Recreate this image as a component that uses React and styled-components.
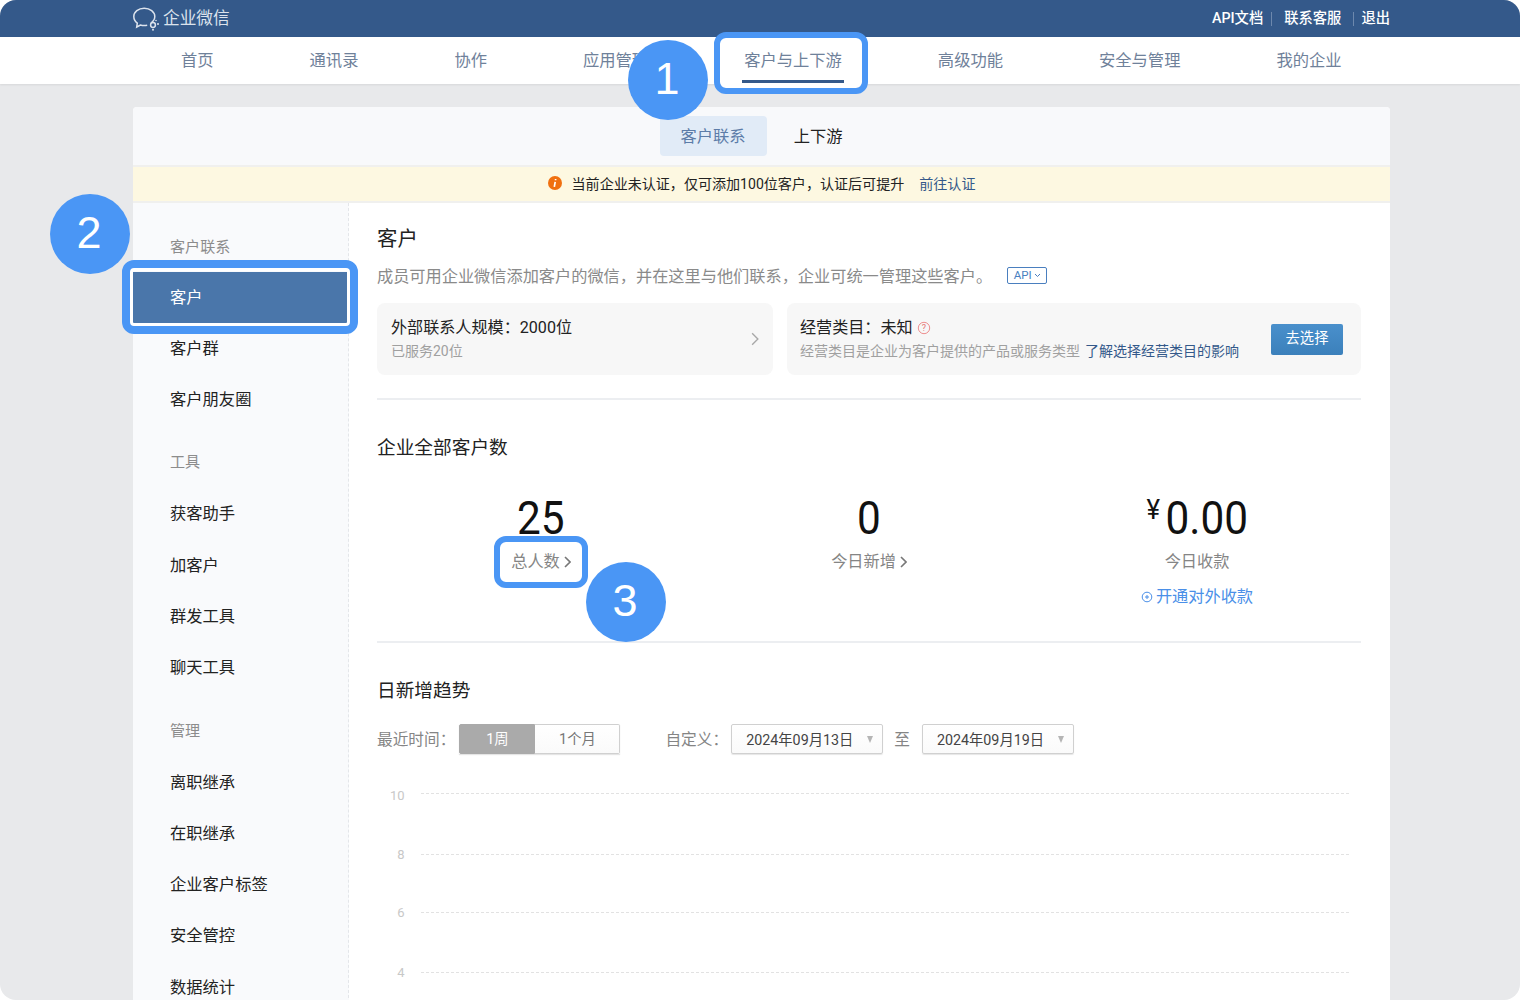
import React from 'react';
import styled, { createGlobalStyle } from 'styled-components';

const Global = createGlobalStyle`
  html, body { margin: 0; padding: 0; background: #fff; }
  * { box-sizing: border-box; }
`;

const FONT = `"Roboto", "Noto Sans CJK SC", sans-serif`;

const Page = styled.div`
  position: relative;
  width: 1520px;
  height: 1000px;
  overflow: hidden;
  background: #e8e9eb;
  border-radius: 16px;
  font-family: ${FONT};
  color: #222;
`;

const TopBar = styled.header`
  height: 37px;
  background: #34598a;
  display: flex;
  align-items: center;
  justify-content: space-between;
  padding: 0 130px 0 133px;
`;
const Brand = styled.div`
  display: flex;
  align-items: center;
  gap: 3px;
  color: #dce3ed;
  font-size: 16.7px;
  line-height: 37px;
`;
const TopLinks = styled.nav`
  display: flex;
  align-items: center;
  color: #fff;
  font-size: 14.3px;
  font-weight: 500;
  line-height: 37px;
`;
const Sep = styled.span`
  width: 1px;
  height: 14px;
  background: #6d88ad;
  margin: 0 ${p => p.$right}px 0 ${p => p.$left}px;
`;

const MainNav = styled.nav`
  height: 47px;
  background: #fff;
  display: flex;
  align-items: center;
  gap: 96px;
  padding-left: 181px;
  box-shadow: 0 1px 2px rgba(0,0,0,.08);
`;
const NavItem = styled.a`
  position: relative;
  font-size: 16.3px;
  line-height: 47px;
  color: #6f819a;
  white-space: nowrap;
  ${p => p.$active && `
    &::after {
      content: '';
      position: absolute;
      left: -2px;
      right: -2px;
      bottom: 1px;
      height: 3px;
      background: #34598a;
    }
  `}
`;

const Card = styled.section`
  width: 1257px;
  margin: 23px 0 0 133px;
  background: #fff;
  border-radius: 4px 4px 0 0;
  overflow: hidden;
`;
const TabBar = styled.div`
  height: 58px;
  background: #f8f9fb;
  display: flex;
  align-items: center;
  justify-content: center;
  gap: 6px;
`;
const Tab = styled.a`
  height: 40px;
  padding: 0 21px;
  border-radius: 4px;
  font-size: 16.3px;
  line-height: 42px;
  background: ${p => (p.$active ? '#e1ebf7' : 'transparent')};
  color: ${p => (p.$active ? '#5c7ca8' : '#222')};
`;
const Notice = styled.div`
  height: 38px;
  background: #fdf8e1;
  border-top: 2px solid #f0f0ee;
  border-bottom: 2px solid #f0f0ee;
  padding-bottom: 2px;
  display: flex;
  align-items: center;
  justify-content: center;
  font-size: 14.05px;
  color: #222;
`;
const NoticeIcon = styled.svg`
  width: 14px;
  height: 14px;
  margin-right: 10px;
`;
const NoticeLink = styled.a`
  margin-left: 15px;
  color: #34598a;
`;

const Body = styled.div`
  display: flex;
  align-items: stretch;
`;
const Side = styled.aside`
  width: 216px;
  flex: none;
  height: 800px;
  background: #f9fafc;
  border-right: 1px dashed #e4e6ea;
  padding-top: 18.5px;
`;
const SideLabel = styled.div`
  height: ${p => p.$h}px;
  line-height: 50px;
  padding-left: 37px;
  font-size: 15.1px;
  color: #8c8c8c;
  margin-top: ${p => p.$top || 0}px;
`;
const SideItem = styled.a`
  display: block;
  height: 51.3px;
  line-height: 51.3px;
  padding-left: 37px;
  font-size: 16.3px;
  color: ${p => (p.$active ? '#fff' : '#222')};
  background: ${p => (p.$active ? '#4a76aa' : 'transparent')};
`;

const Content = styled.main`
  flex: 1;
  padding: 21px 29px 0 28px;
`;
const PageTitle = styled.h1`
  margin: 0;
  font-size: 20.4px;
  font-weight: 400;
  line-height: 30px;
`;
const Desc = styled.div`
  margin-top: 9px;
  height: 24px;
  display: flex;
  align-items: center;
  font-size: 16.2px;
  color: #8a8a8a;
  white-space: nowrap;
`;
const ApiTag = styled.span`
  margin: 1px 0 0 15px;
  width: 40px;
  height: 17px;
  border: 1px solid #4a7fbf;
  border-radius: 2px;
  font-size: 11.500px;
  line-height: 15px;
  color: #4a7fbf;
  display: flex;
  align-items: center;
  justify-content: center;
  gap: 2px;
`;
const InfoRow = styled.div`
  margin-top: 16px;
  display: flex;
  gap: 14px;
`;
const InfoCard = styled.div`
  height: 72px;
  background: #f7f7f7;
  border-radius: 8px;
  display: flex;
  align-items: center;
  justify-content: space-between;
  width: ${p => p.$w}px;
  padding: 0 ${p => p.$pr}px 0 ${p => p.$pl}px;
`;
const InfoTitle = styled.div`
  display: flex;
  align-items: center;
  gap: 4px;
  font-size: 16.1px;
  line-height: 24px;
  color: #222;
`;
const InfoSub = styled.div`
  font-size: 14px;
  line-height: 22px;
  color: #a0a0a0;
  white-space: nowrap;
`;
const InfoLink = styled.a`
  margin-left: 5px;
  color: #34598a;
`;
const PrimaryBtn = styled.button`
  width: 72px;
  height: 31px;
  border: 0;
  border-radius: 2px;
  background: linear-gradient(#4a90cc, #3b80bb);
  color: #fff;
  font: 14.3px/29px ${FONT};
  padding: 0 0 2px;
`;
const Divider = styled.div`
  height: 2px;
  background: #eceef1;
  margin-top: ${p => p.$top}px;
`;
const SectionTitle = styled.h2`
  margin: ${p => p.$top}px 0 0;
  font-size: 18.7px;
  font-weight: 400;
  line-height: 28px;
  color: #222;
`;
const Stats = styled.div`
  margin-top: 29px;
  height: 150px;
  display: grid;
  grid-template-columns: repeat(3, 1fr);
`;
const Stat = styled.div`
  display: flex;
  flex-direction: column;
  align-items: center;
`;
const Num = styled.div`
  font-size: 46px;
  line-height: 54px;
  color: #111;
  transform: scaleX(.92);
  display: flex;
  align-items: flex-start;
`;
const Yen = styled.span`
  font-size: 28px;
  line-height: 38px;
  margin-right: 6px;
`;
const StatLabel = styled.div`
  margin-top: 5px;
  display: flex;
  align-items: center;
  gap: 4px;
  font-size: 16.2px;
  line-height: 24px;
  color: #858585;
`;
const StatLink = styled.a`
  margin-top: 11px;
  display: flex;
  align-items: center;
  gap: 3px;
  font-size: 16.2px;
  line-height: 24px;
  color: #4a8fe8;
`;
const Controls = styled.div`
  margin-top: 19px;
  height: 30px;
  display: flex;
  align-items: center;
  font-size: 15.7px;
  color: #858585;
`;
const ControlLabel = styled.span`
  margin-bottom: 2px;
`;
const Seg = styled.div`
  margin: 0 45px 0 4px;
  display: flex;
  height: 30px;
  box-shadow: 0 1px 1px rgba(0,0,0,.1);
`;
const SegBtn = styled.span`
  width: ${p => p.$w}px;
  text-align: center;
  line-height: 28px;
  font-size: 14.3px;
  color: ${p => (p.$on ? '#fff' : '#777')};
  background: ${p => (p.$on ? '#aaa' : 'linear-gradient(#fff,#fafafa)')};
  border: 1px solid ${p => (p.$on ? '#aaa' : '#d0d0d0')};
  border-left: ${p => (p.$on ? '1px solid #aaa' : '0')};
  border-radius: ${p => (p.$on ? '2px 0 0 2px' : '0 2px 2px 0')};
`;
const DateSel = styled.div`
  width: 152px;
  height: 30px;
  margin-left: ${p => p.$left}px;
  border: 1px solid #d0d0d0;
  border-radius: 2px;
  background: linear-gradient(#fff,#fafafa);
  box-shadow: 0 1px 1px rgba(0,0,0,.1);
  padding: 0 9px 2px 14px;
  display: flex;
  align-items: center;
  justify-content: space-between;
  font-size: 14.3px;
  color: #444;
  white-space: nowrap;
`;
const Caret = styled.span`
  width: 0;
  height: 0;
  margin-top: 3px;
  border-left: 3.5px solid transparent;
  border-right: 3.5px solid transparent;
  border-top: 7px solid #b5b5b5;
`;
const To = styled(ControlLabel)`
  margin-left: 11px;
`;
const Chart = styled.svg`
  display: block;
  margin-top: 22px;
  width: 984px;
  height: 220px;
`;

const Mark = styled.div`
  position: absolute;
  left: ${p => p.$x}px;
  top: ${p => p.$y}px;
  width: ${p => p.$w}px;
  height: ${p => p.$h}px;
  border: ${p => p.$b}px solid #4a96f5;
  border-radius: 12px;
  box-shadow: inset 0 0 0 ${p => p.$ring}px #fff;
  pointer-events: none;
`;
const Badge = styled.div`
  position: absolute;
  left: ${p => p.$x}px;
  top: ${p => p.$y}px;
  width: 80px;
  height: 80px;
  padding-right: 2px;
  border-radius: 50%;
  background: #4a96f5;
  color: #fff;
  font-family: "Liberation Sans", sans-serif;
  font-size: 45px;
  line-height: 78px;
  text-align: center;
`;

const Chevron = ({ w = 7, h = 12, color = '#777', sw = 1.6 }) => (
  <svg width={w} height={h} viewBox="0 0 7 12" fill="none">
    <path d="M1 1l5 5-5 5" stroke={color} strokeWidth={sw} />
  </svg>
);

const NAV = ['首页', '通讯录', '协作', '应用管理', '客户与上下游', '高级功能', '安全与管理', '我的企业'];
const GROUPS = [
  { label: '客户联系', h: 50, top: 0, items: ['客户', '客户群', '客户朋友圈'] },
  { label: '工具', h: 51, top: 12, items: ['获客助手', '加客户', '群发工具', '聊天工具'] },
  { label: '管理', h: 51, top: 12, items: ['离职继承', '在职继承', '企业客户标签', '安全管控', '数据统计'] },
];
const TICKS = [['10', 17, 23.5], ['8', 78, 82.5], ['6', 136, 140.5], ['4', 196, 200.5]];

export default function App() {
  return (
    <Page>
      <Global />
      <TopBar>
        <Brand>
          <svg width="27" height="24" viewBox="0 0 27 24" fill="none" stroke="#dce3ed" strokeWidth="1.5">
            <path d="M18 16c2.500-1.800 3.800-4 3.800-6.500C21.800 5 17 1.200 11.200 1.200S.8 5 .8 9.500c0 2.700 1.300 5 3.500 6.600L3.700 20l3.700-2c1.200.4 2.500.6 3.800.6 1 0 2-.1 3-.3" />
            <circle cx="20" cy="18" r="2.400" />
            <circle cx="25" cy="17" r="1" fill="#dce3ed" stroke="none" />
            <circle cx="20" cy="22.800" r="1" fill="#dce3ed" stroke="none" />
            <circle cx="23" cy="13.500" r=".8" fill="#dce3ed" stroke="none" />
          </svg>
          企业微信
        </Brand>
        <TopLinks>
          API文档<Sep $left={8} $right={12} />联系客服<Sep $left={12} $right={7} />退出
        </TopLinks>
      </TopBar>
      <MainNav>
        {NAV.map(n => <NavItem key={n} $active={n === '客户与上下游'}>{n}</NavItem>)}
      </MainNav>
      <Card>
        <TabBar>
          <Tab $active>客户联系</Tab>
          <Tab>上下游</Tab>
        </TabBar>
        <Notice>
          <NoticeIcon viewBox="0 0 14 14">
            <circle cx="7" cy="7" r="7" fill="#f0700f" />
            <path d="M7.200 5.800L6.300 10.800M7.600 3v1.300" stroke="#fff" strokeWidth="1.700" />
          </NoticeIcon>
          当前企业未认证，仅可添加100位客户，认证后可提升
          <NoticeLink>前往认证</NoticeLink>
        </Notice>
        <Body>
          <Side>
            {GROUPS.map(g => (
              <React.Fragment key={g.label}>
                <SideLabel $top={g.top} $h={g.h}>{g.label}</SideLabel>
                {g.items.map(i => <SideItem key={i} $active={i === '客户'}>{i}</SideItem>)}
              </React.Fragment>
            ))}
          </Side>
          <Content>
            <PageTitle>客户</PageTitle>
            <Desc>
              成员可用企业微信添加客户的微信，并在这里与他们联系，企业可统一管理这些客户。
              <ApiTag>
                API
                <svg width="7" height="5" viewBox="0 0 7 5" fill="none"><path d="M1 1l2.500 2.500L6 1" stroke="#4a7fbf" /></svg>
              </ApiTag>
            </Desc>
            <InfoRow>
              <InfoCard $w={396} $pr={14} $pl={14}>
                <div>
                  <InfoTitle>外部联系人规模：2000位</InfoTitle>
                  <InfoSub>已服务20位</InfoSub>
                </div>
                <Chevron w={8} h={14} color="#a8a8a8" sw={1.2} />
              </InfoCard>
              <InfoCard $w={574} $pr={18} $pl={13}>
                <div>
                  <InfoTitle>
                    经营类目：未知
                    <svg width="14" height="14" viewBox="0 0 14 14" fill="none">
                      <circle cx="7" cy="7" r="5.700" stroke="#ee8f8f" />
                      <text x="7" y="10" textAnchor="middle" fontSize="9" fill="#e57373">?</text>
                    </svg>
                  </InfoTitle>
                  <InfoSub>
                    经营类目是企业为客户提供的产品或服务类型
                    <InfoLink>了解选择经营类目的影响</InfoLink>
                  </InfoSub>
                </div>
                <PrimaryBtn>去选择</PrimaryBtn>
              </InfoCard>
            </InfoRow>
            <Divider $top={23} />
            <SectionTitle $top={34}>企业全部客户数</SectionTitle>
            <Stats>
              <Stat>
                <Num>25</Num>
                <StatLabel>总人数<Chevron w={7} h={12} /></StatLabel>
              </Stat>
              <Stat>
                <Num>0</Num>
                <StatLabel>今日新增<Chevron w={7} h={12} /></StatLabel>
              </Stat>
              <Stat>
                <Num><Yen>¥</Yen>0.00</Num>
                <StatLabel>今日收款</StatLabel>
                <StatLink>
                  <svg width="12" height="12" viewBox="0 0 12 12" fill="none">
                    <circle cx="6" cy="6" r="4.800" stroke="#4a8fe8" />
                    <path d="M4 6h4M6 4v4" stroke="#4a8fe8" />
                  </svg>
                  开通对外收款
                </StatLink>
              </Stat>
            </Stats>
            <Divider $top={0} />
            <SectionTitle $top={34}>日新增趋势</SectionTitle>
            <Controls>
              <ControlLabel>最近时间：</ControlLabel>
              <Seg>
                <SegBtn $on $w={76}>1周</SegBtn>
                <SegBtn $w={85}>1个月</SegBtn>
              </Seg>
              <ControlLabel>自定义：</ControlLabel>
              <DateSel $left={3}>2024年09月13日<Caret /></DateSel>
              <To>至</To>
              <DateSel $left={12}>2024年09月19日<Caret /></DateSel>
            </Controls>
            <Chart viewBox="0 0 984 220">
              {TICKS.map(([t, y, ty]) => (
                <g key={t}>
                  <text x="27.500" y={ty} textAnchor="end" fontSize="13" fill="#c8c8c8" fontFamily="Roboto">{t}</text>
                  <line x1="44" x2="972" y1={y + 0.5} y2={y + 0.5} stroke="#e2e2e2" strokeDasharray="3 2" />
                </g>
              ))}
            </Chart>
          </Content>
        </Body>
      </Card>
      <Mark $x={714} $y={32} $w={154} $h={62} $b={6} $ring={4} />
      <Mark $x={122} $y={260} $w={236} $h={74} $b={8} $ring={3} />
      <Mark $x={494} $y={536} $w={94} $h={52} $b={6} $ring={0} />
      <Badge $x={628} $y={40}>1</Badge>
      <Badge $x={50} $y={194}>2</Badge>
      <Badge $x={586} $y={562}>3</Badge>
    </Page>
  );
}
